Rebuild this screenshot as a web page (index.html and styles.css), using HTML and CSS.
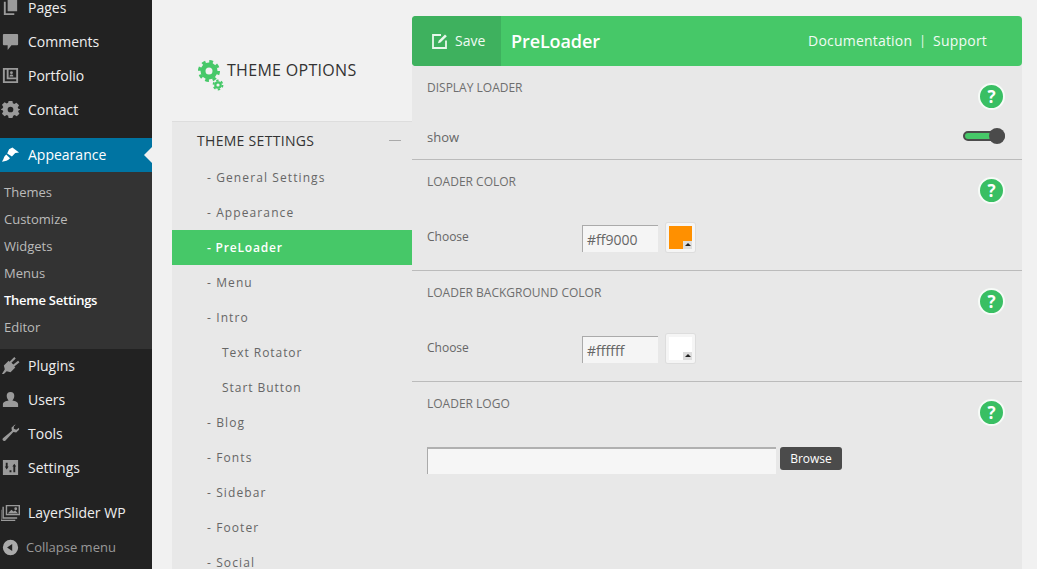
FILE: index.html
```html
<!DOCTYPE html>
<html lang="en">
<head>
<meta charset="utf-8">
<title>Theme Options</title>
<link rel="stylesheet" href="styles.css">
</head>
<body>
<div class="page">
  <aside class="wp">
    <ul class="wp-top">
      <li class="wp-item"><svg class="wi" viewBox="0 0 20 20"><path d="M7 0h10v14H7zM3 4h2v12h9v2H3z"/></svg>Pages</li>
      <li class="wp-item"><svg class="wi" viewBox="0 0 20 20"><path d="M3 2h14a1 1 0 0 1 1 1v10a1 1 0 0 1-1 1h-6l-4 5v-5H3a1 1 0 0 1-1-1V3a1 1 0 0 1 1-1z"/></svg>Comments</li>
      <li class="wp-item"><svg class="wi" viewBox="0 0 20 20"><path fill-rule="evenodd" d="M2 2h16v16H2zM8 4v8h8V4zM4 4v12h12v-2H6V4z"/><path d="M11 5.500a1.500 1.500 0 1 1 0 3 1.500 1.500 0 0 1 0-3zM9 11c0-1.500 1-2 2-2s2 .5 2 2z"/></svg>Portfolio</li>
      <li class="wp-item"><svg class="wi" viewBox="0 0 20 20"><path fill-rule="evenodd" d="M8 1h4l.5 2.500 1.500.7 2.200-1.400 2.800 2.800-1.400 2.200.7 1.500L21 10v0l-2.300.7-.7 1.500 1.400 2.200-2.800 2.800-2.200-1.400-1.500.7L12 19H8l-.5-2.500-1.500-.7-2.200 1.400L1 14.400l1.400-2.200-.7-1.500L-.5 10l2.200-1.200.7-1.500L1 5.100l2.800-2.800L6 3.700l1.500-.7zM10 7a3 3 0 1 0 0 6 3 3 0 0 0 0-6z"/></svg>Contact</li>
    </ul>
    <div class="wp-active"><svg class="wi" viewBox="0 0 20 20"><path d="M1 17.500c2-2 1.500-5 4.500-7.500l4 4c-2 2.500-5 3-8.500 3.500zM6.500 9l2-4.500L12 2.500l7 5.500-4 .5-3.500 3.500z"/></svg>Appearance<span class="wp-arrow"></span></div>
    <ul class="wp-sub">
      <li>Themes</li><li>Customize</li><li>Widgets</li><li>Menus</li><li class="cur">Theme Settings</li><li>Editor</li>
    </ul>
    <ul class="wp-bottom">
      <li class="wp-item"><svg class="wi" viewBox="0 0 20 20"><path d="M1 19l3-5-1-4 5-5 1 1 5-5 1.500 1.500L11 7l2 2 5-4 1.500 1.500L14 11l1 1-5 5-4-1-3 3z"/></svg>Plugins</li>
      <li class="wp-item"><svg class="wi" viewBox="0 0 20 20"><path d="M10 2a4 4 0 0 1 4 4c0 2-1 4-2 5 3 .5 6 1.500 6 4v3H2v-3c0-2.500 3-3.500 6-4-1-1-2-3-2-5a4 4 0 0 1 4-4z"/></svg>Users</li>
      <li class="wp-item"><svg class="wi" viewBox="0 0 20 20"><path d="M14 1l-3 3 .5 3L2 15c-1.500 1.500 1 4 2.500 2.500L13 8.500l3 .5 3-3 0-2-3 2-2.500-1 0-2.500 2-2z"/></svg>Tools</li>
      <li class="wp-item"><svg class="wi" viewBox="0 0 20 20"><path fill-rule="evenodd" d="M2 2h16v16H2zM5 5v4H4l2 3 2-3H7V5zm8 10h2V9h1l-2-3-2 3h1zM9 13v2h2v-2z"/></svg>Settings</li>
      <li class="wp-item wp-ls"><svg class="wi wi-l" viewBox="0 0 20 20"><path fill-rule="evenodd" d="M5 2h15v11H5zM6.500 3.500v8h12v-8z"/><path d="M7 11l4-4 2 2 2-1 3 3zM15.500 4.500a1.500 1.500 0 1 1 0 3 1.500 1.500 0 0 1 0-3zM3 4v11h14v1.500H1.500V4zM.500 7v10.500H15V19H-.5V7z"/></svg>LayerSlider WP</li>
      <li class="wp-collapse"><svg class="wc" viewBox="0 0 20 20"><path fill-rule="evenodd" d="M10 1a9 9 0 1 1 0 18 9 9 0 0 1 0-18zM12 6l-6 4 6 4z"/></svg>Collapse menu</li>
    </ul>
  </aside>

  <div class="options">
    <nav class="theme-nav">
      <div class="brand">
        <svg class="gears" viewBox="0 0 26 31">
          <circle class="g-ring" cx="11" cy="11" r="6" stroke-width="5"/>
          <circle class="g-ring" cx="11" cy="11" r="9.500" stroke-width="3" stroke-dasharray="3.730 3.730"/>
          <circle class="g-ring" cx="20" cy="25" r="2.700" stroke-width="2.200"/>
          <circle class="g-ring" cx="20" cy="25" r="4.500" stroke-width="1.800" stroke-dasharray="2.360 2.360"/>
        </svg>
        <span>THEME OPTIONS</span>
      </div>
      <div class="nav-body">
        <div class="nav-title"><span>THEME SETTINGS</span><i class="nav-dash"></i></div>
        <ul class="nav-list">
          <li>- General Settings</li>
          <li>- Appearance</li>
          <li class="on">- PreLoader</li>
          <li>- Menu</li>
          <li>- Intro</li>
          <li class="child">Text Rotator</li>
          <li class="child">Start Button</li>
          <li>- Blog</li>
          <li>- Fonts</li>
          <li>- Sidebar</li>
          <li>- Footer</li>
          <li>- Social</li>
        </ul>
      </div>
    </nav>

    <main class="panel">
      <header class="bar">
        <div class="save"><svg class="save-i" viewBox="0 0 16 16"><path d="M9 2H1v13h13V7.500" fill="none" stroke="#e8f8ec" stroke-width="1.800"/><path d="M6 10.300l.7-2.500L13 1.500l1.800 1.800L8.500 9.600z" fill="#e8f8ec"/></svg><span>Save</span></div>
        <h1>PreLoader</h1>
        <div class="links"><span>Documentation</span><i>|</i><span>Support</span></div>
      </header>

      <section class="opt opt-first">
        <div class="opt-head"><h2>DISPLAY LOADER</h2><b class="help">?</b></div>
        <div class="opt-row row-show"><span>show</span><span class="toggle"><i></i></span></div>
      </section>
      <section class="opt">
        <div class="opt-head"><h2>LOADER COLOR</h2><b class="help">?</b></div>
        <div class="opt-row row-color"><label>Choose</label><span class="hex">#ff9000</span><span class="swatch"><i class="sw-orange"></i><em></em></span></div>
      </section>
      <section class="opt">
        <div class="opt-head"><h2>LOADER BACKGROUND COLOR</h2><b class="help">?</b></div>
        <div class="opt-row row-color"><label>Choose</label><span class="hex">#ffffff</span><span class="swatch"><i class="sw-white"></i><em></em></span></div>
      </section>
      <section class="opt opt-last">
        <div class="opt-head"><h2>LOADER LOGO</h2><b class="help">?</b></div>
        <div class="opt-row row-file"><span class="file"></span><span class="browse">Browse</span></div>
      </section>
    </main>
  </div>
</div>
</body>
</html>
```
FILE: styles.css
```css
* { box-sizing: border-box; }
html, body { margin: 0; height: 100%; overflow: hidden; }
body { background: #f1f1f1; font-family: "Open Sans", sans-serif; color: #666; }
ul { list-style: none; margin: 0; padding: 0; }
h1, h2 { margin: 0; font-weight: 400; }

.page { display: flex; height: 569px; overflow: hidden; }

/* WordPress menu */
.wp { width: 152px; flex: none; background: #222; color: #eee; font-size: 14px; overflow: hidden; }
.wp-top { margin-top: -9px; margin-bottom: 11px; }
.wp-item { height: 34px; padding-bottom: 2px; display: flex; align-items: center; white-space: nowrap; }
.wi { width: 19px; height: 19px; margin: 0 8px 0 1px; flex: none; fill: #9a9a9a; }
.wi-l { width: 19px; margin-right: 8px; }
.wp-active { height: 34px; padding-bottom: 2px; background: #0074a2; color: #fff; display: flex; align-items: center; position: relative; }
.wp-active .wi { fill: #fff; }
.wp-arrow { position: absolute; right: 0; top: 9px; border: 8px solid transparent; border-right-color: #f1f1f1; border-left-width: 0; }
.wp-sub { background: #333; height: 177px; padding-top: 7px; font-size: 13px; color: #bbb; }
.wp-sub li { height: 27px; line-height: 27px; padding-left: 4px; }
.wp-sub .cur { color: #fff; font-weight: 600; letter-spacing: -.25px; }
.wp-ls { margin-top: 11px; }
.wp-collapse { height: 34px; display: flex; align-items: center; font-size: 13px; color: #999; }
.wc { width: 17px; height: 17px; margin: 0 7px 0 2px; fill: #aaa; flex: none; }

/* Options */
.options { display: flex; margin-left: 20px; width: 850px; }
.theme-nav { width: 240px; flex: none; display: flex; flex-direction: column; overflow: hidden; }
.brand { height: 121px; flex: none; padding: 60px 0 0 26px; display: flex; align-items: flex-start; font-size: 16px; letter-spacing: .3px; color: #333; }
.brand span { line-height: 20px; margin-left: 3px; }
.gears { width: 26px; height: 31px; flex: none; }
.g-ring { fill: none; stroke: #46c868; }
.nav-body { flex: 1; background: #e8e8e8; border-top: 1px solid #ddd; }
.nav-title { height: 38px; padding: 0 11px 2px 25px; display: flex; align-items: center; justify-content: space-between; font-size: 14px; letter-spacing: .3px; color: #333; }
.nav-dash { width: 12px; height: 1px; background: #aaa; }
.nav-list { font-size: 12px; letter-spacing: 1.100px; color: #666; }
.nav-list li { height: 35px; line-height: 35px; padding-left: 35px; }
.nav-list .child { padding-left: 50px; letter-spacing: .95px; }
.nav-list .on { background: #46c868; color: #fff; font-weight: 600; letter-spacing: .8px; }

/* Main panel */
.panel { width: 610px; flex: none; margin-top: 16px; background: #e8e8e8; }
.bar { height: 50px; padding-bottom: 1px; background: #46c868; border-radius: 4px; display: flex; align-items: center; color: #f1fbf4; }
.save { width: 89px; height: 50px; margin-bottom: -1px; padding: 0 0 1px 20px; background: #3eb15e; border-radius: 4px 0 0 4px; display: flex; align-items: center; font-size: 14px; }
.save-i { width: 16px; height: 16px; margin-right: 7px; }
.bar h1 { font-size: 18px; font-weight: 600; letter-spacing: -.1px; color: #fff; margin-left: 10px; }
.links { margin-left: auto; margin-right: 35px; font-size: 14px; letter-spacing: .2px; display: flex; align-items: center; }
.links i { font-style: normal; margin: 0 7px; font-size: 12px; }

.opt { height: 111px; border-bottom: 1px solid #bbb; padding: 0 17px 0 15px; }
.opt-first { height: 94px; }
.opt-last { border-bottom: 0; }
.opt-head { display: flex; justify-content: space-between; align-items: flex-start; height: 55px; }
.opt-head h2 { font-size: 12px; line-height: 16px; margin-top: 14px; color: #6e6e6e; }
.help { width: 27px; height: 27px; margin-top: 17px; border-radius: 50%; border: 2px solid #f6fbf7; background: #39bf63; color: #fff; font-size: 17px; line-height: 23px; text-align: center; font-weight: 700; }
.opt-row { display: flex; align-items: center; font-size: 13px; }
.row-show { height: 32px; justify-content: space-between; }
.toggle { width: 42px; height: 10px; margin-top: -2px; border: 2px solid #4b4b4b; border-radius: 5px; background: #46c868; position: relative; }
.toggle i { position: absolute; right: -2px; top: -5px; width: 16px; height: 16px; border-radius: 50%; background: #4b4b4b; }
.row-color { height: 32px; margin-top: 7px; }
.row-color label { width: 155px; font-size: 12px; margin-top: -4px; }
.hex { width: 76px; height: 27px; background: #f5f5f5; border-top: 1px solid #aaa; border-left: 1px solid #aaa; font-size: 14px; line-height: 27px; padding-left: 4px; color: #666; }
.swatch { width: 29px; height: 29px; margin-left: 8px; margin-top: -1px; border: 3px solid #f5f5f5; border-radius: 2px; position: relative; display: block; box-shadow: 0 0 0 1px #ddd; }
.swatch i { display: block; width: 23px; height: 23px; }
.sw-orange { background: #ff9000; }
.sw-white { background: #fff; }
.swatch em { position: absolute; right: 0; bottom: 0; width: 9px; height: 8px; background: #ddd; }
.swatch em::after { content: ""; position: absolute; left: 2px; top: 2px; border: 3px solid transparent; border-bottom-color: #222; border-top-width: 0; }
.row-file { margin-top: 10px; }
.file { width: 349px; height: 27px; background: #f6f6f6; border-top: 2px solid #b0b0b0; border-left: 1px solid #aaa; }
.browse { width: 62px; height: 23px; margin-left: 4px; margin-top: -4px; border-radius: 3px; background: #4b4b4b; color: #fff; font-size: 12px; text-align: center; line-height: 23px; }
```
